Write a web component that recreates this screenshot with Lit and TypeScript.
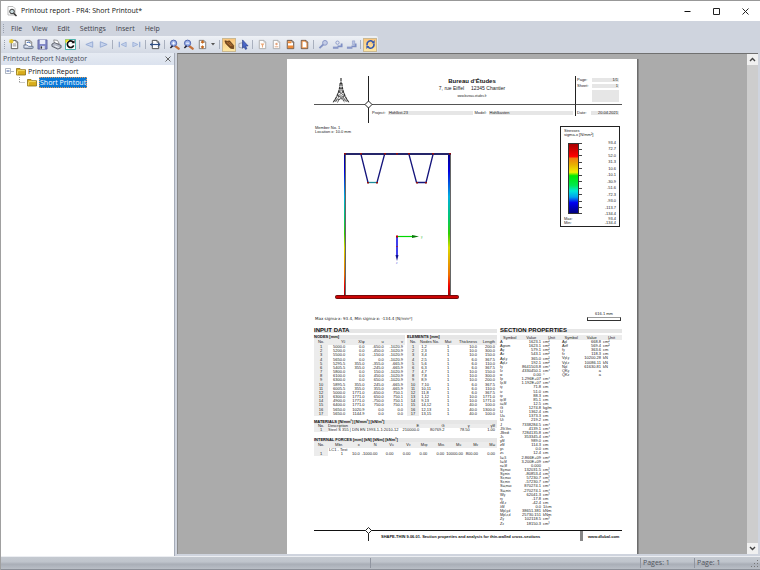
import { LitElement, html, svg, css, nothing } from "lit";
import { customElement } from "lit/decorators.js";
import { classMap } from "lit/directives/class-map.js";

/* ---------- toolbar icons, 12 x 12 grid ---------- */
const sheet = (stroke = "#555", fill = "#fff") =>
  svg`<path d="M2.5 1.5h5l2 2v7h-7z" fill=${fill} stroke=${stroke} stroke-width="1"/><path d="M7.5 1.5v2h2" fill="none" stroke=${stroke} stroke-width=".7"/>`;
const lens = (sign: unknown) => svg`
  <path d="M6.500 7.500L10.500 10.500" stroke="#c4703a" stroke-width="2.600" stroke-linecap="round"/>
  <circle cx="5" cy="4.600" r="3.400" fill="#9db2ea" stroke="#4a60a8"/>
  <path d="M1.500 9.800L4 7.500" stroke="#223" stroke-width="1.600"/>${sign}`;
const key = svg`
  <circle cx="7.6" cy="4.2" r="2.6" fill="#c3cce6" stroke="#8493c4"/>
  <path d="M5.8 6L1.6 10" stroke="#8493c4" stroke-width="2"/>`;
const hand = svg`
  <path d="M6 8h4.5V5" fill="none" stroke="#7f8fc4" stroke-width="2"/>
  <path d="M1 9.5h6" stroke="#8a98c8" stroke-width="2.4"/>`;

const icons: Record<string, unknown> = {
  create: svg`${sheet()}<path d="M4 5.5h4M4 7.5h4" stroke="#888"/><path d="M2.5 0v5M0 2.5h5M.7.7l3.6 3.6M4.3.7L.7 4.3" stroke="#e4c62a" stroke-width="1.1"/>`,
  open: svg`${sheet("#777")}<path d="M1 10V6.500h3.500L6 8h5v2z" fill="#dfe6f3" stroke="#46587c" stroke-width=".8"/><path d="M4 4q3-2 4 1" fill="none" stroke="#3565b5"/>`,
  save: svg`<path d="M1 1h10v10H1z" fill="#7f86c6" stroke="#5a5f96" stroke-width=".8"/><path d="M3 1h6v4.500H3z" fill="#e9ecf8"/><path d="M3.500 7.500h5V11h-5z" fill="#d8dbe8"/><path d="M4 8h1.500v2.500H4z" fill="#333"/>`,
  print: svg`<path d="M3 1l4 .5 2 3.500-5 1z" fill="#fff" stroke="#666" stroke-width=".7"/><path d="M1 5.500l3-1.500 7 3v2.500L7.500 11 1 8z" fill="#b4b9c6" stroke="#3f434d" stroke-width=".8"/><path d="M4 7.500l4.500 1.800" stroke="#fff"/>`,
  renew: svg`<path d="M.5.500h11v11H.500z" fill="#fff" stroke="#36a9a2"/><path d="M9 3.500A3.600 3.600 0 1 0 9.500 7" fill="none" stroke="#111" stroke-width="1.800"/><path d="M7 4.500h3.500V1z" fill="#111"/><path d="M.500.500h4.500L.500 5z" fill="#f3e21c"/>`,
  prev: svg`<path d="M9.500 3v6L2 6z" fill="#c6d3ec" stroke="#93a9d3"/>`,
  next: svg`<path d="M2.500 3v6L10 6z" fill="#c6d3ec" stroke="#93a9d3"/>`,
  first: svg`<path d="M10 3.500v5L4.500 6z" fill="#c6d3ec" stroke="#93a9d3" stroke-width=".8"/><path d="M2.500 3v6" stroke="#93a9d3" stroke-width="1.300"/>`,
  last: svg`<path d="M2 3.500v5L7.500 6z" fill="#c6d3ec" stroke="#93a9d3" stroke-width=".8"/><path d="M9.500 3v6" stroke="#93a9d3" stroke-width="1.300"/>`,
  goto: svg`${sheet("#444")}<path d="M0 6h11" stroke="#2f4f86" stroke-width="1.300"/><path d="M3 4L1 6l2 2M8.500 4l2.500 2-2.500 2" fill="none" stroke="#2f4f86"/>`,
  zoomin: lens(svg`<path d="M3.400 4.600h3.200M5 3v3.200" stroke="#fff"/>`),
  zoomout: lens(svg`<path d="M3.400 4.600h3.200" stroke="#fff"/>`),
  fit: svg`${sheet("#777")}<path d="M6 2v3M4.500 4L6 2l1.500 2M6 7v3M4.500 8L6 10l1.500-2" fill="none" stroke="#c46a22" stroke-width="1.200"/>`,
  grab: svg`<path d="M1 2l3 .5L6 2l4.500 5v3.500L7 10 2 5z" fill="#7a4a1e" stroke="#4c2b0e" stroke-width=".7"/><path d="M3 3.500l4.500 4M5 3l4 4.500" stroke="#d89048" stroke-width=".7"/>`,
  select: svg`<path d="M1 5l4-1v6l-4-1z" fill="#e4e7ee" stroke="#8a8f9c" stroke-width=".7"/><path d="M5 1l6 6.500-2.800.2 1.500 3-1.700.6L6.800 8.500 5 10z" fill="#4a66c8" stroke="#223a86" stroke-width=".7"/>`,
  filter: svg`${sheet("#aaa")}<path d="M3.800 5h4.400L6.600 7v2.200H5.400V7z" fill="#eba878"/>`,
  picture: svg`${sheet("#aaa")}<path d="M4 8.500h4" stroke="#e3a27c"/><circle cx="6" cy="5.500" r="1.300" fill="#e3a27c"/>`,
  header: svg`${sheet("#5c4434")}<path d="M3 2.500h4v2.200H3zM3 7h6v3H3z" fill="#ef8a36"/>`,
  frame: svg`${sheet("#5c4434")}<path d="M3.400 2.400h3.600l1.600 1.600v5.600H3.400z" fill="none" stroke="#ef8a36"/>`,
  keyA: key,
  keyB: svg`${hand}<circle cx="6" cy="4" r="1.800" fill="none" stroke="#8a98c8"/>`,
  keyC: svg`${hand}<path d="M7 2h2.500v4H7z" fill="#b9c3e2" stroke="#8a98c8" stroke-width=".6"/>`,
  sync: svg`<path d="M2.500 7A3.700 3.700 0 0 1 8.500 3M9.500 5A3.700 3.700 0 0 1 3.500 9" fill="none" stroke="#2e55b0" stroke-width="1.700"/><path d="M7 4.500h3.500V1zM5 7.500H1.500V11z" fill="#2e55b0"/>`,
};

type Tool = { icon: string; label: string; on?: boolean; menu?: boolean } | null;
const t = (icon: string, label: string, extra = {}): Tool => ({ icon, label, ...extra });
const tools: Tool[] = [
  t("create", "New"), t("open", "Open"), t("save", "Save"), t("print", "Print"), t("renew", "Regenerate"), null,
  t("prev", "Previous page"), t("next", "Next page"), null,
  t("first", "First page"), t("last", "Last page"), null,
  t("goto", "Go to page"), null,
  t("zoomin", "Zoom in"), t("zoomout", "Zoom out"), t("fit", "Fit page", { menu: true }), null,
  t("grab", "Pan", { on: true }), t("select", "Select"), null,
  t("filter", "Selection"), t("picture", "Insert graphic"), t("header", "Header"), t("frame", "Page frame"), null,
  t("keyA", "Lock"), t("keyB", "Unlock"), t("keyC", "Lock all"), null,
  t("sync", "Auto update", { on: true }),
];

/* ---------- report data ---------- */
const nodes = `1 5000.0 0.0 -650.0 -1020.9
2 5200.0 0.0 -450.0 -1020.9
3 5500.0 0.0 -150.0 -1020.9
4 5650.0 0.0 0.0 -1020.9
5 5295.5 355.0 -355.0 -665.9
6 5405.5 355.0 -245.0 -665.9
7 5800.0 0.0 150.0 -1020.9
8 6100.0 0.0 450.0 -1020.9
9 6300.0 0.0 650.0 -1020.9
10 5895.5 355.0 245.0 -665.9
11 6005.5 355.0 355.0 -665.9
12 5000.0 1771.0 -650.0 750.1
13 6300.0 1771.0 650.0 750.1
14 4900.0 1771.0 -750.0 750.1
15 6400.0 1771.0 750.0 750.1
16 5650.0 1020.9 0.0 0.0
17 5650.0 1144.9 0.0 0.0`.split("\n").map((r) => r.split(" "));

const elements = `1 1,2 1 10.0 200.0
2 2,3 1 10.0 300.0
3 3,4 1 10.0 150.0
4 2,5 1 6.0 367.5
5 5,6 1 6.0 110.0
6 6,3 1 6.0 367.5
7 4,7 1 10.0 150.0
8 7,8 1 10.0 300.0
9 8,9 1 10.0 200.0
10 7,10 1 6.0 367.5
11 10,11 1 6.0 110.0
12 11,8 1 6.0 367.5
13 1,12 1 10.0 1771.0
14 9,13 1 10.0 1771.0
15 14,12 1 40.0 100.0
16 12,13 1 40.0 1300.0
17 13,15 1 40.0 100.0`.split("\n").map((r) => r.split(" "));

const props = `A  1623.1 cm²
A geom 1623.1 cm²
A y 579.1 cm²
A z 543.1 cm²
A pl,y 365.0 cm²
A pl,z 192.1 cm²
I y 8641503.8 cm⁴
I z 4330450.1 cm⁴
α  0.00 °
I p 1.296E+07 cm⁴
I p,M 1.192E+07 cm⁴
i y 71.8 cm
i z 51.0 cm
i p 88.3 cm
i p,M 85.1 cm
i ω,M 12.5 cm
G  1274.8 kg/m
U  1362.4 cm
U a 1373.3 cm
U i 219.2 cm
J  7338284.5 cm⁴
J St.Ven. 4139.1 cm⁴
J Bredt 7284135.8 cm⁴
J s 353345.4 cm⁴
y M 989.0 cm
z M 114.3 cm
y s 0.0 cm
z s 12.4 cm
I ω,S 2.866E+09 cm⁶
I ω,M 3.200E+09 cm⁶
r ω,M 0.000
S y,max 132031.5 cm³
S y,min -80853.4 cm³
S z,max 57230.7 cm³
S z,min -57230.7 cm³
S ω,max 870274.1 cm⁴
S ω,min -270274.1 cm⁴
W y 62041.3 cm³
r y -17.8 cm
r M,z -42.4 cm
λ M 0.0 1/cm
M pl,y,d 38651.381 kNm
M pl,z,d 25730.151 kNm
Z y 102118.5 cm³
Z z 18150.3 cm³`.split("\n").map((r) => r.split(" "));

const extraProps = `A pl 668.8 cm²
A eff 569.4 cm²
f y 363.6 cm
f z 118.3 cm
V pl,y 10200.28 kN
V pl,z 10086.11 kN
N pl 61630.81 kN
QK y a
QK z a`.split("\n").map((r) => r.split(" "));

const legend = ["93.4", "72.7", "52.0", "31.3", "10.6", "-10.1", "-30.9", "-51.6", "-72.3", "-93.0", "-113.7", "-134.4"];

@customElement("app-root")
export class AppRoot extends LitElement {
  static styles = css`
    :host { display: flex; flex-direction: column; height: 100vh; box-sizing: border-box; overflow: hidden;
      border-top: 1px solid #989898; border-left: 1px solid #a0a0a0;
      font: 7px/10px "Open Sans", "Noto Sans", sans-serif; color: #222; background: #cfd4de; }
    button { font: inherit; color: inherit; background: none; border: 0; padding: 0; margin: 0; }
    svg { display: block; }
    .title { display: flex; align-items: center; height: 20px; flex: none; background: #fff; padding-left: 6px; color: #111; }
    .title svg { flex: none; }
    .title h1 { flex: 1; font: inherit; margin: 0 0 0 4px; }
    .win { display: grid; place-items: center; width: 29px; height: 20px; }
    .menu { display: flex; align-items: center; gap: 10px; height: 15px; flex: none; padding-left: 2px; color: #41434a; }
    .grip { width: 1px; height: 9px; margin-right: -4px; border-left: 1px dotted #9aa1af; }
    .tools { display: flex; align-items: center; align-self: flex-start; height: 17px; flex: none; padding: 0 1px 0 3px;
      background: linear-gradient(#eef1f6, #d3d9e4); border-radius: 0 2px 2px 0; }
    .tools .grip { margin: 0 1px 0 0; }
    .tool { display: grid; place-items: center; box-sizing: border-box; width: 14px; height: 14px; }
    .on { background: linear-gradient(#fbc57a, #fde7a4); border: 1px solid #c9b893; }
    .arrow { width: 8px; display: grid; place-items: center; height: 14px; }
    .sep { width: 1px; height: 9px; margin: 0 2px; background: #a9b0be; }
    .main { display: flex; flex: 1; min-height: 0; }
    .nav { width: 173px; flex: none; display: flex; flex-direction: column; background: #fff; border-right: 1px solid #a5abb7; margin-right: 2px; }
    .nav header { display: flex; align-items: center; justify-content: space-between; height: 12px; padding: 0 3px 0 2px;
      background: linear-gradient(#e6ebf3, #dbe2ee); color: #464b58; }
    .nav h2 { font: inherit; margin: 0; }
    ul { list-style: none; margin: 0; padding: 0; }
    .tree { padding: 1px 4px; }
    .tree button { display: flex; align-items: center; gap: 2px; height: 11px; color: #111; }
    .tree ul { padding-left: 13px; }
    .picked { background: #0a78d6; color: #fff; outline: 1px dotted #e09a5a; outline-offset: -1px; line-height: 11px; padding: 0 1px; }
    .view { flex: 1; min-width: 0; overflow: hidden; background: #ababab; border-top: 1px solid #707070; border-left: 1px solid #8b8b8b; padding-top: 5px; margin-bottom: 2px; }
    .scroll { width: 11px; flex: none; display: flex; flex-direction: column; background: #f0f0f0; margin-right: 2px; border-top: 1px solid #707070; margin-bottom: 2px; }
    .scroll button { display: grid; place-items: center; height: 11px; }
    .thumb { flex: 1; background: #cdcdcd; }
    .status { display: flex; align-items: center; height: 12px; flex: none; color: #50545c; border-top: 1px solid #eceef2; border-bottom: 1px solid #8b8f98;
      background: linear-gradient(#c4c9d0, #bfc4cc 40%, #a9aeb7 60%, #b9bec6); }
    .status span { border-left: 1px solid #9095a0; height: 10px; padding-left: 2px; box-sizing: border-box; }
    .s0 { flex: 370; border: 0 !important; } .s1 { flex: 270; } .s2 { width: 54px; } .s3 { width: 57px; }

    .page { width: 351px; min-height: 495px; box-sizing: border-box; margin: 0 auto; padding: 17px 15px 0 27px; background: #fff;
      border-right: 1px solid #6c6c6c; box-shadow: 1px 0 0 #888; font: 4px/4px "Liberation Sans", Arial, sans-serif; color: #222; }
    .head { display: grid; grid-template-columns: 55px 1fr 47px; position: relative; }
    .head > * { box-sizing: border-box; }
    .logo { height: 29px; border-right: 1px solid #222; border-bottom: 1px solid #555; display: grid; place-items: center; }
    .firm { text-align: center; border-bottom: 1px solid #555; font-size: 5px; line-height: 6px; padding-top: 2px; }
    .firm b { display: block; font-size: 6px; line-height: 7px; color: #111; }
    .firm i { font: 3px/4px "Liberation Sans", sans-serif; display: block; margin-top: 3px; }
    .sheetno { border-left: 1px solid #222; border-bottom: 1px solid #555; display: grid; grid-template-columns: 15px 1fr; gap: 2px 0; align-content: start; padding: 2px 3px 0 1px; }
    .f { background: #e6e6e6; padding: 0 1px; line-height: 4px; }
    .num { text-align: right; }
    .big { grid-column: 2; height: 12px; }
    .l0 { border-right: 1px solid #222; height: 18px; }
    .l1 { display: grid; grid-template-columns: 14px 1fr 12px 1fr; gap: 0 2px; padding: 6px 2px 0 3px; align-content: start; }
    .l2 { border-left: 1px solid #222; height: 11px; display: grid; grid-template-columns: 14px 1fr; padding: 6px 3px 0 1px; align-content: start; }
    .dia { position: absolute; left: 50px; top: 24px; }

    .fig { display: flex; justify-content: space-between; align-items: flex-start; padding: 3px 2px 0 0; }
    .fig p { margin: 0 0 6px; padding-left: 1px; }
    .legend { width: 60px; height: 101px; box-sizing: border-box; border: 1px solid #222; padding: 2px 3px; }
    .scale { display: flex; margin: 4px 0 1px 4px; height: 75px; }
    .ramp { width: 11px; margin: 2px 0; border: 1px solid #333; box-sizing: border-box;
      background: linear-gradient(#a80000, #f00 18%, #f08010 21%, #e8b000 30%, #f0f000 41%, #00e800 46%, #00e850 60%, #00e8d8 68%, #00a0f0 77%, #0000f0 85%, #000080); }
    .scale ol { list-style: none; margin: 0; padding: 0; flex: 1; display: flex; flex-direction: column; justify-content: space-between; }
    .scale li, .mm { display: flex; justify-content: space-between; align-items: center; }
    .scale li::before { content: ""; width: 3px; height: 1px; background: #444; }
    .sub { display: flex; justify-content: space-between; align-items: flex-end; height: 11px; padding: 0 1px; }
    .sub span { font: 4px/5px "DejaVu Sans", sans-serif; }
    .bar { width: 34px; box-sizing: border-box; text-align: center; border: 1px solid #333; border-top-color: #999; height: 4px; line-height: 0; }
    .bar b { font-weight: normal; position: relative; top: -4px; }

    .cols { display: grid; grid-template-columns: 183px 1fr; gap: 3px; padding-top: 4px; }
    h3 { margin: 0; font: bold 6px/10px "Liberation Sans", sans-serif; color: #111; background: linear-gradient(#fff 4px, #e6e6e6 4px, #e6e6e6 8px, #fff 8px); }
    .pair { display: grid; grid-template-columns: 91px 90px; gap: 2px; }
    table { border-collapse: collapse; table-layout: fixed; width: 100%; }
    caption { background: #e6e6e6; text-align: left; font-weight: bold; color: #111; height: 4px; white-space: nowrap; }
    th { font-weight: normal; background: #ececec; }
    td, th { box-sizing: border-box; padding: 0 2px 0 0; text-align: right; height: 4px; white-space: nowrap; }
    .tall { height: 77px; }
    .tall thead th { height: 6px; }
    .no { background: #ececec; text-align: center; width: 14px; padding: 0; }
    .e .no { width: 12px; }
    .c { text-align: center; } .l { text-align: left; }
    .w12 { width: 12px; } .w19 { width: 19px; } .w24 { width: 24px; } .w68 { width: 68px; }
    .mat { margin-top: 4px; }
    .force { margin-top: 6px; }
    .force thead th { height: 6px; }
    .props { display: grid; grid-template-columns: 62px 1fr; align-items: start; }
    .props td:first-child, .props td:last-child { text-align: left; }
    .props th { text-align: center; }
    .props thead th { height: 5px; }
    .props td:last-child { padding: 0; }
    .p45 { height: 191px; }
    .p9 { height: 42px; }
    sub { font-size: 3px; line-height: 0; vertical-align: baseline; }
    .foot { display: grid; grid-template-columns: 55px 1fr 39px; position: relative; border-top: 1px solid #111; font-weight: bold; line-height: 4px; margin-top: 4px; color: #111; }
    .foot > * { height: 10px; box-sizing: border-box; padding-top: 4px; white-space: nowrap; }
    .f0 { border-right: 1px solid #222; }
    .f1 { padding-left: 12px; border-right: 3px solid #888; }
    .f2 { padding-left: 5px; color: inherit; text-decoration: none; }
    .foot .dia2 { position: absolute; left: 51px; top: -4px; padding: 0; height: 7px; }
  `;

  private symbol(name: string, index: string) {
    return html`${name}${index ? html`<sub>${index}</sub>` : nothing}`;
  }

  private propTable(rows: string[][], cls: string) {
    return html`<table class=${cls}>
      <thead><tr><th>Symbol</th><th>Value</th><th class="w19">Unit</th></tr></thead>
      <tbody>${rows.map(([s, i, v, u]) => html`<tr><td>${this.symbol(s, i)}</td><td>${v}</td><td>${u ?? ""}</td></tr>`)}</tbody>
    </table>`;
  }

  private folder() {
    return svg`<svg width="10" height="9" viewBox="0 0 10 9"><path d="M.5 8V1.500h3.500l1 1.200h4.500V8z" fill="#d8ac1c" stroke="#8a7014" stroke-width=".8"/><path d="M1.200 7.500L1.800 3.600h7" fill="none" stroke="#f4dc62"/></svg>`;
  }

  private drawing() {
    return svg`<svg width="160" height="170" viewBox="0 0 160 170" role="img" aria-label="Stress diagram">
      <defs>
        <linearGradient id="g" gradientUnits="userSpaceOnUse" x1="0" y1="14" x2="0" y2="156">
          <stop offset="0" stop-color="#000088"/><stop offset=".12" stop-color="#0000e0"/><stop offset=".3" stop-color="#00b0e0"/>
          <stop offset=".45" stop-color="#00c870"/><stop offset=".56" stop-color="#30d000"/><stop offset=".66" stop-color="#dcdc00"/>
          <stop offset=".85" stop-color="#f07000"/><stop offset=".93" stop-color="#f00000"/><stop offset="1" stop-color="#a00000"/>
        </linearGradient>
      </defs>
      <path d="M31 14h1v142h-1zM136 14h1v142h-1z" fill="#666"/>
      <path d="M30 14h1v142h-1z" fill="url(#g)"/><path d="M134 14h2v142h-2z" fill="url(#g)"/>
      <path d="M30 14h107" stroke="#333" stroke-width="2"/><path d="M30 14h107" stroke="#1818a0" stroke-width="1"/>
      <path d="M47 14.500l7 28M63 42.500l7.500-28M95 14.500l7.500 28M112 42.500l7-28M103 42.500h9" fill="none" stroke="#15157c" stroke-width="1.300"/>
      <path d="M54 42.500h9" stroke="#1d8c9c" stroke-width="1.300"/>
      <path d="M23 157h120" stroke="#5c0c0c" stroke-width="4" stroke-linecap="round"/>
      <path d="M23 157h120" stroke="#cc0404" stroke-width="2.400" stroke-linecap="round"/>
      <g fill="#901010">${[[30, 13], [46, 13], [70, 13], [82, 13], [94, 13], [118, 13], [135, 13], [53, 42], [62, 42], [102, 42], [111, 42]].map(
        ([x, y]) => svg`<rect x=${x} y=${y} width="2" height="1.500"/>`)}</g>
      <path d="M83 96.500h18" stroke="#00d800" stroke-width="1.200"/><path d="M98 95l7 1.500-7 1.500z" fill="#087808"/>
      <path d="M83 97v20" stroke="#1010e8" stroke-width="1.600"/><path d="M81.500 115h3l-1.500 6z" fill="#101090"/>
      <path d="M82 95.500h2v2h-2zM82.500 106h1v1h-1z" fill="#c00000"/>
      <text x="107" y="98" font-size="3" fill="#40c040">y</text><text x="82" y="124" font-size="3" fill="#6060e0">z</text>
    </svg>`;
  }

  render() {
    return html`
      <header class="title">
        <svg width="10" height="12" viewBox="0 0 10 12"><path d="M1 1.500h5l2 2V10H1z" fill="#fff" stroke="#aaa" stroke-width=".8"/><circle cx="5" cy="6.500" r="2.300" fill="#c8d8dc" stroke="#333"/><path d="M6.600 8.200L9.500 11" stroke="#333" stroke-width="1.500"/></svg>
        <h1>Printout report - PR4: Short Printout*</h1>
        <button class="win" aria-label="Minimize"><svg width="7" height="7" viewBox="0 0 7 7"><path d="M.5 3.500h6" stroke="#111"/></svg></button>
        <button class="win" aria-label="Maximize"><svg width="7" height="7" viewBox="0 0 7 7"><path d="M.5.500h6v6h-6z" fill="none" stroke="#222"/></svg></button>
        <button class="win" aria-label="Close"><svg width="7" height="7" viewBox="0 0 7 7"><path d="M.5.500l6 6M6.500.500l-6 6" stroke="#222"/></svg></button>
      </header>
      <nav class="menu"><span class="grip"></span>
        ${["File", "View", "Edit", "Settings", "Insert", "Help"].map((m) => html`<button>${m}</button>`)}
      </nav>
      <div class="tools" role="toolbar"><span class="grip"></span>
        ${tools.map((x) => x === null ? html`<span class="sep"></span>` : html`
          <button class=${classMap({ tool: true, on: !!x.on })} aria-label=${x.label}><svg width="11" height="11" viewBox="0 0 12 12">${icons[x.icon]}</svg></button>
          ${x.menu ? html`<button class="arrow" aria-label="Zoom options"><svg width="4" height="3" viewBox="0 0 4 3"><path d="M0 0h4L2 2.500z" fill="#555"/></svg></button>` : nothing}`)}
      </div>
      <div class="main">
        <aside class="nav">
          <header><h2>Printout Report Navigator</h2>
            <button aria-label="Close navigator"><svg width="6" height="6" viewBox="0 0 6 6"><path d="M.5.500l5 5M5.500.500l-5 5" stroke="#555" stroke-width=".9"/></svg></button></header>
          <ul class="tree"><li>
            <button><svg width="9" height="9" viewBox="0 0 9 9"><path d="M.5 1.500h5v5h-5zM6 4.500h3" fill="#fff" stroke="#9aa4b4" stroke-width=".8"/><path d="M1.500 4h3" stroke="#3c5aa0"/></svg>${this.folder()}Printout Report</button>
            <ul><li><button><svg width="7" height="11" viewBox="0 0 7 11"><path d="M1.500 0v6M1.500 5.500H7" fill="none" stroke="#999" stroke-dasharray="1 1"/></svg>${this.folder()}<span class="picked">Short Printout</span></button></li></ul>
          </li></ul>
        </aside>
        <main class="view"><article class="page">
          <div class="head">
            <div class="logo"><svg width="18" height="25" viewBox="0 0 18 25"><g fill="none" stroke="#333" stroke-width=".8">
              <path d="M9 0v6M8.200 5Q7.500 16 1 24.500M9.800 5Q10.500 16 17 24.500" stroke-width="1.200" stroke-dasharray="3 .5"/>
              <path d="M8 10h2.500M7 14h4M5.500 18h7M8 10l3 4-5 4 6 3M10 10l-3 4 6 4-7 4M5.500 24.500Q9 17 12.500 24.500M3 22h4M11 22h4M7.500 18l-4 6M10.500 18l4 6" stroke-dasharray="2 .6"/></g></svg></div>
            <div class="firm"><b>Bureau d'Études</b>7, rue Eiffel &nbsp; &nbsp; 12345 Chantier<i>www.bureau-etudes.fr</i></div>
            <div class="sheetno"><span>Page:</span><span class="f num">1/1</span><span>Sheet:</span><span class="f num">1</span><span class="f big"></span></div>
            <div class="l0"></div>
            <div class="l1"><span>Project:</span><span class="f">Hohlkst.23</span><span>Model:</span><span class="f">Hohlkasten</span></div>
            <div class="l2"><span>Date:</span><span class="f num">20.04.2021</span></div>
            <svg class="dia" width="9" height="9" viewBox="0 0 9 9"><path d="M4.500 1L8 4.500 4.500 8 1 4.500z" fill="#fff" stroke="#222"/></svg>
          </div>
          <section class="fig">
            <div><p>Member No. 1<br>Location x: 10.0 mm</p>${this.drawing()}</div>
            <div class="legend">Stresses<br>sigma-x [N/mm²]
              <div class="scale"><div class="ramp"></div><ol>${legend.map((v) => html`<li>${v}</li>`)}</ol></div>
              <div class="mm"><span>Max:</span><span>93.4</span></div><div class="mm"><span>Min:</span><span>-134.4</span></div>
            </div>
          </section>
          <div class="sub"><span>Max sigma-x: 93.4, Min sigma-x: -134.4 [N/mm²]</span><div class="bar"><b>616.1 mm</b></div></div>
          <div class="cols">
            <div>
              <h3>INPUT DATA</h3>
              <div class="pair">
                <table class="tall"><caption>NODES [mm]</caption>
                  <thead><tr><th class="no">No.</th><th>Y<sub>0</sub></th><th>X/φ</th><th>u</th><th>v</th></tr></thead>
                  <tbody>${nodes.map((r) => html`<tr>${r.map((c, i) => html`<td class=${i ? "" : "no"}>${c}</td>`)}</tr>`)}</tbody></table>
                <table class="tall e"><caption>ELEMENTS [mm]</caption>
                  <thead><tr><th class="no">No.</th><th class="l w24">&nbsp;Nodes No.</th><th class="c w12">Mat</th><th class="w24">Thickness</th><th>Length</th></tr></thead>
                  <tbody>${elements.map((r) => html`<tr>${r.map((c, i) => html`<td class=${["no", "l", "c", "", ""][i]}>${i === 1 ? html`&nbsp; ${c}` : c}</td>`)}</tr>`)}</tbody></table>
              </div>
              <table class="mat"><caption>MATERIALS [N/mm²] [N/mm²] [kN/m³]</caption>
                <thead><tr><th class="no">No.</th><th class="l w68">Description</th><th>E</th><th>G</th><th>γ</th><th>γ<sub>M</sub></th></tr></thead>
                <tbody><tr><td class="no">1</td><td class="l">Steel S 355 | DIN EN 1993-1-1:2010-12</td><td>210000.0</td><td>80769.2</td><td>78.50</td><td>1.00</td></tr></tbody></table>
              <table class="force"><caption>INTERNAL FORCES [mm] [kN] [kNm] [kNm²]</caption>
                <thead><tr><th class="no">No.</th><th>Mbr.</th>${[["x", ""], ["N", ""], ["V", "u"], ["V", "v"], ["M", "xp"], ["M", "xs"], ["M", "u"], ["M", "v"], ["M", "ω"]].map(([a, b]) => html`<th>${this.symbol(a, b)}</th>`)}</tr></thead>
                <tbody><tr><td class="no"></td><td class="l" colspan="10">&nbsp;LC1 - Test</td></tr>
                <tr><td class="no">1</td>${["1", "10.0", "-1000.00", "0.00", "0.00", "0.00", "0.00", "10000.00", "800.00", "0.00"].map((v) => html`<td>${v}</td>`)}</tr></tbody></table>
            </div>
            <div>
              <h3>SECTION PROPERTIES</h3>
              <div class="props">${this.propTable(props, "p45")}${this.propTable(extraProps, "p9")}</div>
            </div>
          </div>
          <footer class="foot"><span class="f0"></span><span class="f1">SHAPE-THIN 9.06.01. Section properties and analysis for thin-walled cross-sections</span><a class="f2" href="#">www.dlubal.com</a>
            <svg class="dia2" width="7" height="7" viewBox="0 0 7 7"><path d="M3.500.500l3 3-3 3-3-3z" fill="#fff" stroke="#222"/></svg></footer>
        </article></main>
        <div class="scroll"><button aria-label="Scroll up"><svg width="7" height="5" viewBox="0 0 7 5"><path d="M1 4l2.500-2.500L6 4" fill="none" stroke="#444" stroke-width="1.400"/></svg></button><div class="thumb"></div>
          <button aria-label="Scroll down"><svg width="7" height="5" viewBox="0 0 7 5"><path d="M1 1l2.500 2.500L6 1" fill="none" stroke="#444" stroke-width="1.400"/></svg></button></div>
      </div>
      <footer class="status"><span class="s0"></span><span class="s1"></span><span class="s2">Pages: 1</span><span class="s3">Page: 1</span>
        <svg width="9" height="9" viewBox="0 0 9 9"><path d="M6 1h1v1H6zM6 4h1v1H6zM3 4h1v1H3zM6 7h1v1H6zM3 7h1v1H3zM0 7h1v1H0z" fill="#777"/></svg></footer>
    `;
  }
}
